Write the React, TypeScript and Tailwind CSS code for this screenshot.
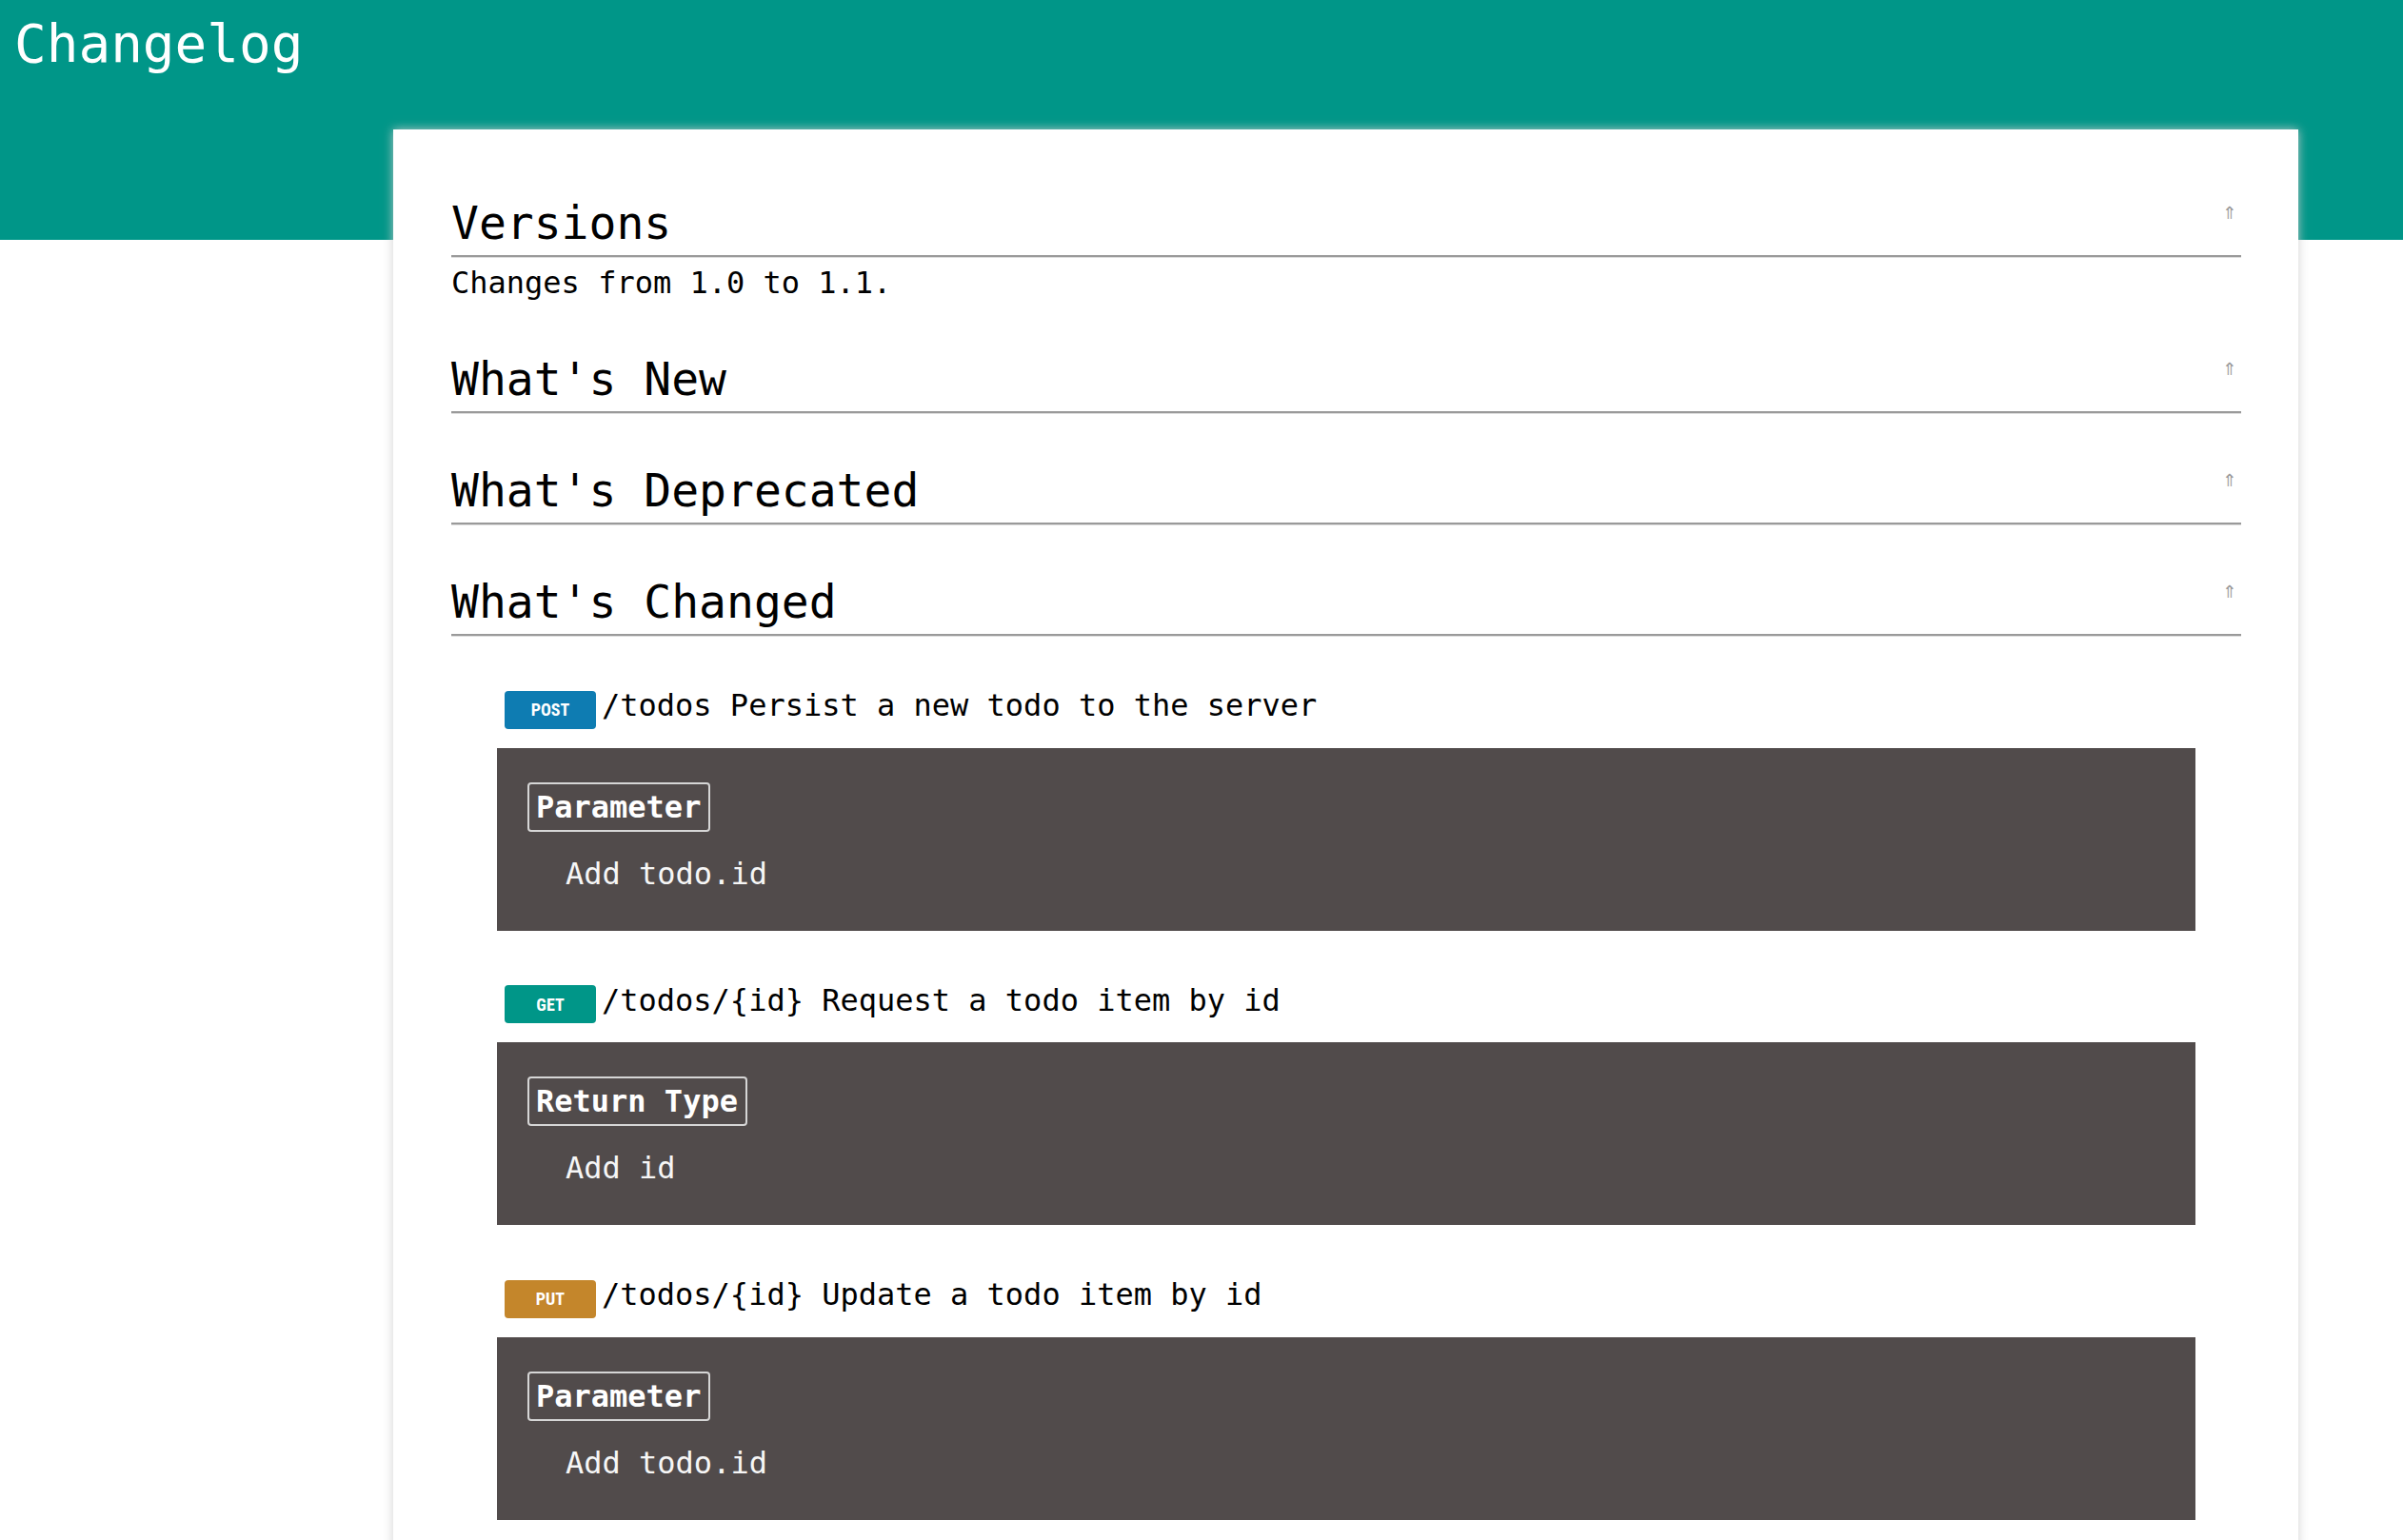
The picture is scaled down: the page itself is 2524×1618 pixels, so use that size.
import React from "react";

type Endpoint = {
  method: string;
  color: string;
  path: string;
  desc: string;
  label: string;
  change: string;
};

const endpoints: Endpoint[] = [
  { method: "POST", color: "bg-[#0e7cb2]", path: "/todos", desc: "Persist a new todo to the server", label: "Parameter", change: "Add todo.id" },
  { method: "GET", color: "bg-[#009688]", path: "/todos/{id}", desc: "Request a todo item by id", label: "Return Type", change: "Add id" },
  { method: "PUT", color: "bg-[#c4862b]", path: "/todos/{id}", desc: "Update a todo item by id", label: "Parameter", change: "Add todo.id" },
];

function Heading({ children, first }: { children: React.ReactNode; first?: boolean }) {
  return (
    <h2
      className={`flex justify-between items-start text-[48px] leading-[56px] font-normal pb-[6px] border-b-2 border-[#9a9a9a] shadow-[0_1px_0_#dedede] ${
        first ? "" : "mt-[53px]"
      }`}
    >
      <span>{children}</span>
      <span className="font-['DejaVu_Sans',sans-serif] text-[18px] leading-[18px] text-[#9a9a9a] mt-[9px] mr-[5px]">⇑</span>
    </h2>
  );
}

function EndpointBlock({ e }: { e: Endpoint }) {
  return (
    <>
      <div className="mt-[53px] ml-[56px] flex items-baseline">
        <span
          className={`inline-flex items-center justify-center w-[96px] h-[40px] rounded-[4px] ${e.color} text-white text-[18px] font-bold font-['Liberation_Sans_Narrow','Roboto_Condensed',Roboto,sans-serif]`}
        >
          {e.method}
        </span>
        <span className="ml-[6px] text-[32px] leading-[40px] whitespace-pre">
          {e.path} {e.desc}
        </span>
      </div>
      <div className="mt-[20px] mx-[48px] bg-[#514b4b] pt-[36px] pb-[40px] px-[32px] text-white">
        <div className="flex">
          <span className="inline-block border-2 border-[#d6d6d6] rounded-[4px] pl-[7px] pr-[8px] py-[4px] text-[32px] leading-[40px] font-bold whitespace-pre">
            {e.label}
          </span>
        </div>
        <div className="mt-[24px] pl-[40px] text-[32px] leading-[40px] text-[#f6f6f6]">{e.change}</div>
      </div>
    </>
  );
}

export default function App() {
  return (
    <div className="min-h-screen bg-white text-black font-['DejaVu_Sans_Mono','Liberation_Mono',monospace]">
      <header className="h-[252px] bg-[#009688] pl-[15px] pt-[14px]">
        <h1 className="text-[56px] leading-[64px] font-normal text-white">Changelog</h1>
      </header>
      <div className="flex -mt-[116px]">
        <div className="w-[413px] shrink-0" />
        <main className="relative w-[2001px] shrink-0 bg-white shadow-[0_0_10px_rgba(205,205,205,0.9)] pl-[61px] pr-[60px] pt-[70px] pb-[80px]">
          <Heading first>Versions</Heading>
          <p className="mt-[7px] text-[32px] leading-[40px]">Changes from 1.0 to 1.1.</p>
          <Heading>What's New</Heading>
          <Heading>What's Deprecated</Heading>
          <Heading>What's Changed</Heading>
          {endpoints.map((e, i) => (
            <EndpointBlock key={i} e={e} />
          ))}
        </main>
      </div>
    </div>
  );
}
